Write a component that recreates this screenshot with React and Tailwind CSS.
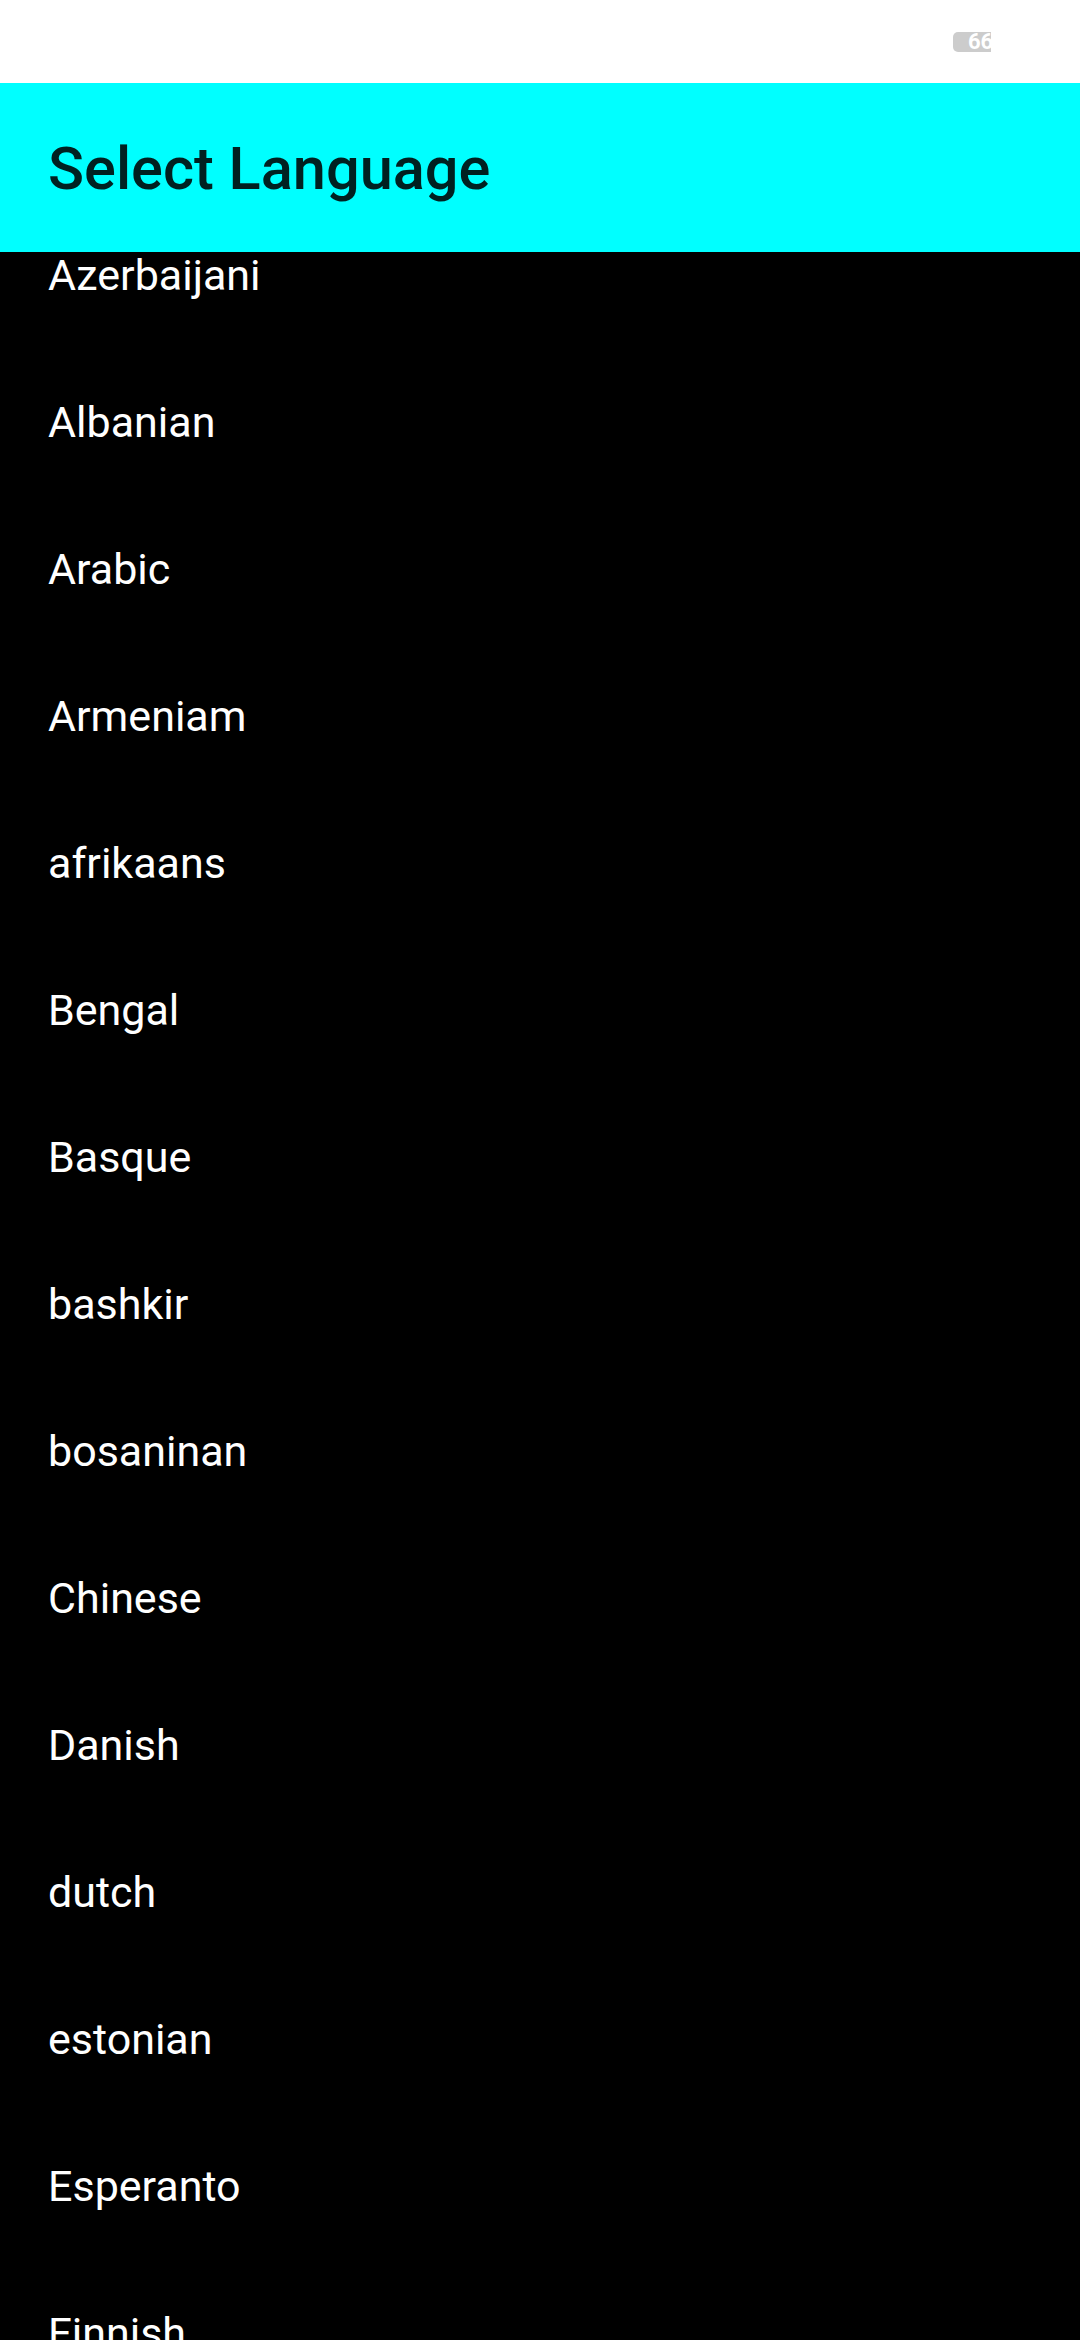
import React from 'react';

const languages = [
  'Azerbaijani',
  'Albanian',
  'Arabic',
  'Armeniam',
  'afrikaans',
  'Bengal',
  'Basque',
  'bashkir',
  'bosaninan',
  'Chinese',
  'Danish',
  'dutch',
  'estonian',
  'Esperanto',
  'Finnish',
  'French',
];

const StatusBar = () => (
  <div className="h-[83px] bg-white flex items-start justify-end pr-[89px] pt-[32px]">
    <div className="w-[38px] h-[20px] overflow-hidden">
      <div className="w-[60px] h-[20px] rounded-[5px] bg-[#cccccc] flex items-center pl-[15px]">
        <span className="text-white font-bold text-[22px] leading-none">66</span>
      </div>
    </div>
  </div>
);

export default function App() {
  return (
    <div
      className="w-[1080px] h-[2340px] bg-black flex flex-col overflow-hidden"
      style={{ fontFamily: 'Roboto, "Noto Sans", sans-serif' }}
    >
      <StatusBar />
      <div className="h-[169px] bg-[#00ffff] flex items-center px-[48px] pt-[5px] shrink-0 z-10">
        <h1 className="text-[59.5px] font-medium text-[#002121] leading-none">Select Language</h1>
      </div>
      <div className="flex-1 overflow-hidden">
        <ul className="-mt-[50px]">
          {languages.map((lang) => (
            <li key={lang} className="h-[147px] flex items-center px-[48px]">
              <span className="text-white text-[43px] leading-none">{lang}</span>
            </li>
          ))}
        </ul>
      </div>
    </div>
  );
}
